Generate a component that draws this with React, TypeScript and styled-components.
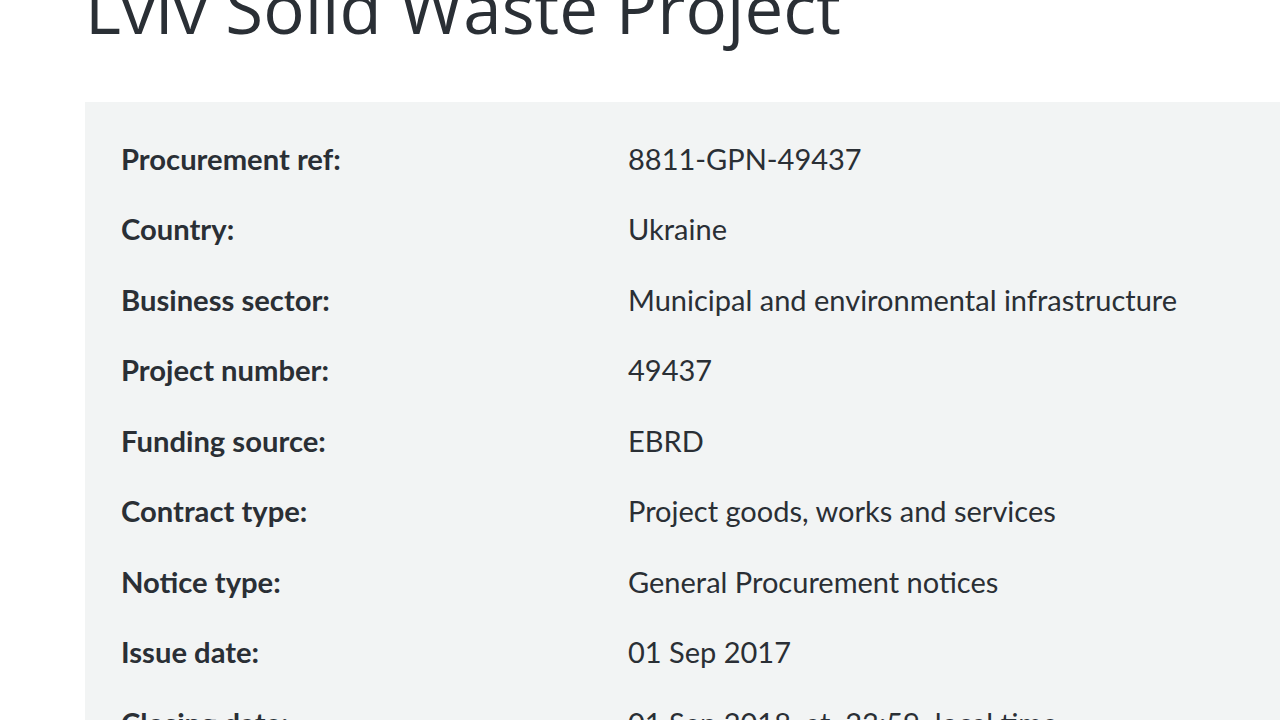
import React from "react";
import styled, { createGlobalStyle } from "styled-components";

const GlobalStyle = createGlobalStyle`
  html, body {
    margin: 0;
    padding: 0;
    background: #fff;
    overflow: hidden;
  }
  body {
    font-family: Lato, "Open Sans", sans-serif;
    color: #2a2f35;
  }
`;

const Page = styled.div`
  width: 1280px;
  height: 720px;
  overflow: hidden;
  padding-left: 85px;
  box-sizing: border-box;
`;

const Title = styled.h1`
  font-family: "Open Sans", sans-serif;
  font-weight: 400;
  font-size: 69px;
  line-height: 76px;
  margin: -31px 0 57px 0;
  color: #2a2f35;
  white-space: nowrap;
`;

const Panel = styled.div`
  background: #f2f4f4;
  padding: 21px 0 0 36px;
  display: grid;
  grid-template-columns: 507px 1fr;
`;

const Cell = styled.div<{ $bold?: boolean }>`
  height: 70.5px;
  display: flex;
  align-items: center;
  font-size: ${(p) => (p.$bold ? "29.2px" : "29px")};
  font-weight: ${(p) => (p.$bold ? 700 : 400)};
  color: #2a2f35;
  white-space: pre;
`;

const rows: [string, string][] = [
  ["Procurement ref:", "8811-GPN-49437"],
  ["Country:", "Ukraine"],
  ["Business sector:", "Municipal and environmental infrastructure"],
  ["Project number:", "49437"],
  ["Funding source:", "EBRD"],
  ["Contract type:", "Project goods, works and services"],
  ["Notice type:", "General Procurement notices"],
  ["Issue date:", "01 Sep 2017"],
  ["Closing date:", "01 Sep 2018  at  23:59  local time"],
];

export default function App() {
  return (
    <Page>
      <GlobalStyle />
      <Title>Lviv Solid Waste Project</Title>
      <Panel>
        {rows.map(([label, value]) => (
          <React.Fragment key={label}>
            <Cell $bold>{label}</Cell>
            <Cell>{value}</Cell>
          </React.Fragment>
        ))}
      </Panel>
    </Page>
  );
}
